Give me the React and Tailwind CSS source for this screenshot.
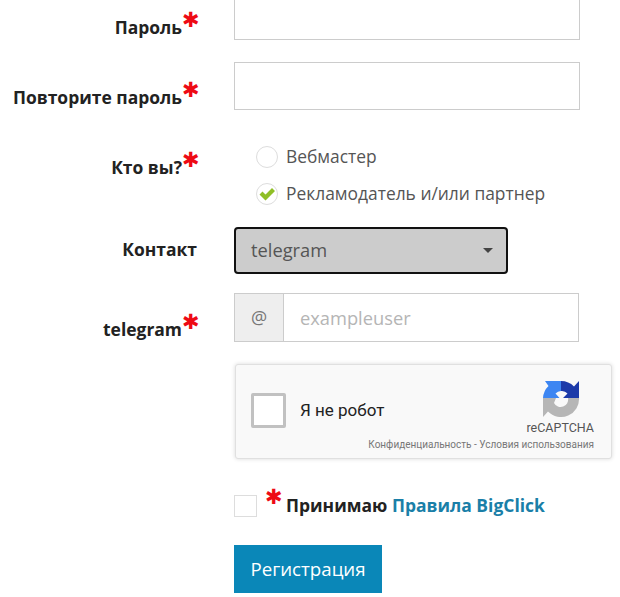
const Star = ({ className = "" }) => (
  <span className={`text-[#ee0a14] text-[21px] font-bold leading-[0] font-['DejaVu_Sans',sans-serif] ${className}`}>✱</span>
);

const Label = ({ children, star = true, className = "" }) => (
  <label className={`flex justify-end items-start text-[17.47px] font-bold text-[#222] leading-6 ${className}`}>
    <span>{children}</span>
    {star && <Star className="mt-[5px] w-[15px] text-center" />}
  </label>
);

const RecaptchaLogo = () => (
  <svg viewBox="0 0 38 38" className="w-[38px] h-[38px]">
    <path d="M37 18A18 18 0 0 1 6 31.500L1 37V18H14L12 23A7.500 7.500 0 0 0 26 18Z" fill="#b6b6b6" />
    <path d="M3 1H19V11A7.500 7.500 0 0 0 13.500 13.500L17.500 18H1A18 18 0 0 1 6.500 6Z" fill="#3d86f2" />
    <path d="M19 1A18 18 0 0 1 32 6.500L37 1V18H21L25.500 13.500A7.500 7.500 0 0 0 19 11Z" fill="#1c3aa9" />
  </svg>
);

export default function App() {
  return (
    <div className="w-[620px] h-[597px] overflow-hidden bg-white font-['Open_Sans',sans-serif]">
      <form className="grid grid-cols-[197px_1fr] gap-x-[37px] -mt-2">
        <Label className="pt-[23px]">Пароль</Label>
        <input type="password" className="w-[346px] h-[48px] border border-[#ccc] bg-white" />

        <Label className="pt-[23px] mt-[22px]">Повторите пароль</Label>
        <input type="password" className="w-[346px] h-[48px] border border-[#ccc] bg-white mt-[22px]" />

        <Label className="pt-[9px] mt-[36px]">Кто вы?</Label>
        <div className="mt-[36px] pl-[22px] flex flex-col gap-[15px] text-[17.4px] leading-[22px] text-[#555]">
          <div className="flex items-center gap-2">
            <span className="w-[22px] h-[22px] rounded-full border border-[#ddd] bg-white"></span>
            <span className="-mt-[2px]">Вебмастер</span>
          </div>
          <div className="flex items-center gap-2">
            <span className="w-[22px] h-[22px] rounded-full border border-[#ddd] bg-white flex items-center justify-center">
              <svg viewBox="0 0 20 20" className="w-[20px] h-[20px]">
                <path d="M2.500 10.500L5.500 7.500L8.500 10.500L15 4L18 7L8.500 16.500Z" fill="#8fbf26" />
              </svg>
            </span>
            <span className="-mt-[2px]">Рекламодатель и/или партнер</span>
          </div>
        </div>

        <Label star={false} className="pt-[10px] mt-[22px]">Контакт</Label>
        <div className="mt-[22px] w-[274px] h-[47px] bg-[#ccc] border-2 border-[#111] rounded-[4px] flex items-center justify-between pl-[15px] pr-[13px] text-[18.3px] text-[#555]">
          <span className="-mt-[2px]">telegram</span>
          <span className="w-0 h-0 border-x-[5px] border-x-transparent border-t-[5px] border-t-[#444]"></span>
        </div>

        <Label className="pt-[24px] mt-[19px]">telegram</Label>
        <div className="mt-[19px] w-[345px] h-[49px] flex border border-[#ccc]">
          <span className="w-[49px] bg-[#eee] border-r border-[#ccc] flex items-center justify-center text-[18px] text-[#777]">@</span>
          <input placeholder="exampleuser" className="flex-1 min-w-0 pl-[16px] pt-[1px] text-[18.3px] outline-none placeholder:text-[#b5b5b5]" />
        </div>

        <div className="col-start-2 mt-[22px] ml-px w-[377px] h-[95px] bg-[#f9f9f9] border border-[#e0e0e0] rounded-[3px] shadow-[0_0_4px_rgba(0,0,0,0.15)] flex justify-between font-['Roboto',sans-serif]">
          <div className="w-[133px] shrink-0 flex items-center pl-[15px] pb-[2px]">
            <span className="w-[35px] h-[35px] shrink-0 bg-white border-[3px] border-[#c1c1c1] rounded-[2px]"></span>
            <span className="ml-[14px] text-[17px] text-[#222] whitespace-nowrap">Я не робот</span>
          </div>
          <div className="w-[242px] shrink-0 flex flex-col items-end pr-[17px] pt-[15px]">
            <div className="pr-[14px]"><RecaptchaLogo /></div>
            <span className="text-[12.500px] leading-[14px] text-[#555] mt-[3px]">reCAPTCHA</span>
            <span className="text-[10px] leading-[12px] text-[#777] mt-[4px] whitespace-nowrap">Конфиденциальность - Условия использования</span>
          </div>
        </div>

        <div className="col-start-2 mt-[36px] flex items-start">
          <span className="w-[23px] h-[22px] bg-white border border-[#ddd]"></span>
          <Star className="ml-[8px] mt-[2px] w-[16px] text-center" />
          <span className="ml-[5px] -mt-[1px] text-[17.47px] font-bold text-[#222] leading-[22px]">
            Принимаю <a href="#" className="text-[#1a7fa8]">Правила BigClick</a>
          </span>
        </div>

        <div className="col-start-2 mt-[28px]">
          <button type="button" className="w-[148px] h-[48px] bg-[#0a87b8] text-white text-[18.7px]">Регистрация</button>
        </div>
      </form>
    </div>
  );
}
